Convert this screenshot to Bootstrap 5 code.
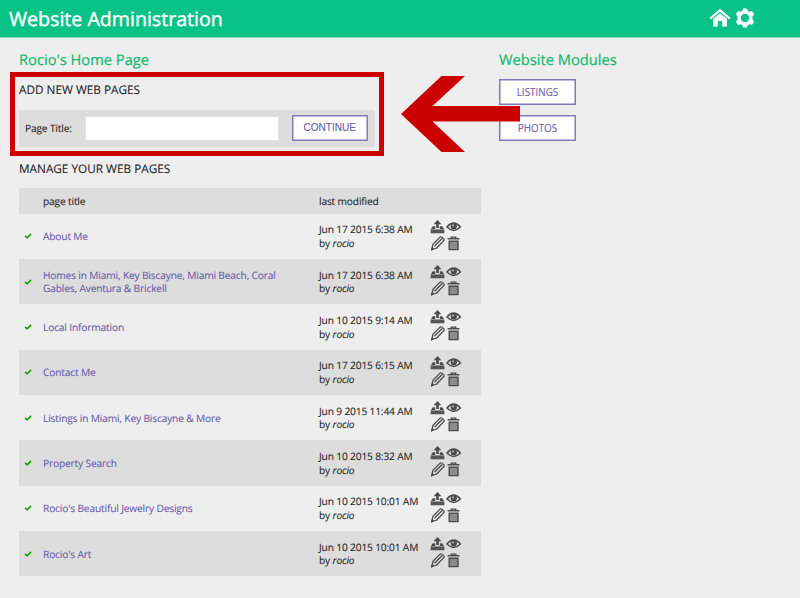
<!DOCTYPE html>
<html lang="en">
<head>
<meta charset="utf-8">
<meta name="viewport" content="width=device-width, initial-scale=1">
<title>Website Administration</title>
<link rel="stylesheet" href="https://cdn.jsdelivr.net/npm/bootstrap@5.3.0/dist/css/bootstrap.min.css">
<style>
body{background:#eee;color:#262626;font-family:"Open Sans",sans-serif;font-size:10.2px;letter-spacing:-.16px;line-height:13.6px;overflow:hidden;text-rendering:geometricPrecision;-webkit-text-stroke:.1px}
.topbar{background:#08c286;height:37.5px;border-bottom:1px solid #8fdcc0}
.site-title{font-size:19.6px;letter-spacing:0;line-height:37px;color:#fff;padding-left:9px;-webkit-text-stroke:.4px}
.top-icons{margin-right:45px;gap:4px}
.page-body{padding:0 0 0 19px}
.main-col{width:462px;margin-right:18px}
.green-head{font-size:14.7px;letter-spacing:0;line-height:20px;color:#14b870;margin:12.5px 0 0;height:20px;-webkit-text-stroke:.2px}
.sub-head{font-size:11.78px;letter-spacing:0;line-height:16px;font-weight:400;color:#222}
.manage-head{margin-top:5px}
.callout{border:5px solid #cb0000;width:374px;height:84px;margin:1.5px 0 0 -9px;padding:5.5px 4px 0}
.add-form{background:#ddd;height:37.5px;width:355.5px;margin-top:11.5px;padding:0 6px}
.add-form label{width:47px;white-space:nowrap;padding-top:2px}
.title-input{width:194px;height:25px;min-height:0;border:1px solid #e4e4e4;border-radius:0;background:#fff;padding:0 4px;margin-left:13px}
.btn-mod{--bs-btn-color:#6a60ab;--bs-btn-bg:#fff;--bs-btn-border-color:#8078bb;--bs-btn-hover-color:#6459a8;--bs-btn-hover-bg:#f4f3fb;--bs-btn-hover-border-color:#6459a8;--bs-btn-border-radius:0;width:77px;height:26px;padding:0;font-size:9.9px;letter-spacing:0;line-height:24px;border-width:1px;box-shadow:inset 0 0 0 .5px #8078bb}
.btn-cont{font-family:"Liberation Sans",Arial,sans-serif;font-size:10.1px;line-height:24px;width:76.5px;margin-left:12.5px}
.module-list{gap:10px;margin-top:9px}
.pages{margin:11.5px 0 0;table-layout:fixed;--bs-table-color:#262626;--bs-table-bg:#eee;color:#262626}
.pages th,.pages td{padding:1.5px 0 0;border:0;vertical-align:middle;font-weight:400}
.pages th{height:25.6px;background:#ddd}
.pages td{height:45.35px}
.pages tbody tr:nth-child(even) td{background:#ddd}
.pages td:first-child{padding:0 0 0 5px}
.pages td:last-child{padding:0 0 1px}
.pages a{color:#675cab;text-decoration:none}
.title-text{max-width:240px}
.tick{display:block}
.arrow-mark{left:401px;top:76px}
</style>
<script src="https://cdn.jsdelivr.net/npm/bootstrap@5.3.0/dist/js/bootstrap.bundle.min.js"></script>
</head>
<body>
<svg width="0" height="0" class="position-absolute" aria-hidden="true">
  <symbol id="tick" viewBox="0 0 8 8"><path d="M1.1 3.9 3.1 5.8 7.1 1.9" fill="none" stroke="#14a30c" stroke-width="1.7"/></symbol>
  <symbol id="tools" viewBox="0 0 32 32">
    <path d="M7.5 0 11.4 4.2H8.8V8H6.2V4.2H3.6ZM2.8 6.3H5.2V9H9.8V6.3H12.2L14.4 9.6H.6Z" fill="#4c4c4c"/>
    <path d="M.6 9.9H14.4V13.3H.6Z" fill="#565656"/>
    <path d="M17 7Q23.6-.8 30.4 7 23.6 13.8 17 7Z" fill="#eee" stroke="#4c4c4c" stroke-width="1.5"/>
    <circle cx="23.8" cy="6.3" r="3.2" fill="#4c4c4c"/><circle cx="23" cy="5.5" r=".9" fill="#ccc"/>
    <path d="M1.6 29.8 3 24.4 10.1 17.1M6.7 28 14 20.4M4.9 25.8 12.2 18.6" fill="none" stroke="#4c4c4c" stroke-width="1.35" stroke-linecap="round"/>
    <path d="M1.6 29.8 6.7 28M10.1 17.1Q11 16.4 12.2 17.3L13.7 18.7Q14.6 19.7 14 20.4" fill="none" stroke="#4c4c4c" stroke-width="1.1"/>
    <path d="M1.1 30.4 2.1 26.8 4.6 29.1Z" fill="#4c4c4c"/>
    <path d="M17.6 18.8H29.4M21.3 18.5V17.1H25.7V18.5" fill="none" stroke="#4c4c4c" stroke-width="1.4"/>
    <path d="M19.2 21.2H28V29.6H19.2Z" fill="#8c8c8c" stroke="#4c4c4c" stroke-width="1.4"/>
  </symbol>
</svg>

<header class="topbar d-flex align-items-center justify-content-between">
  <div class="site-title">Website Administration</div>
  <div class="top-icons d-flex align-items-center">
    <svg width="22" height="20" viewBox="0 0 22 20"><path d="M1.2 10.6 11 2.2 20.8 10.6" fill="none" stroke="#fff" stroke-width="2.3"/><path d="M4 10.9 11 5.2 18 10.9V18.5H13.2V13H8.8V18.5H4Z" fill="#fff"/></svg>
    <svg width="20" height="20" viewBox="0 0 20 20"><path fill="#fff" fill-rule="evenodd" d="M8 .4H12L12.7 2.8 14.2 3.7 16.9 3 19.2 6.2 17.5 8.2V11.8L19.2 13.8 16.9 17 14.2 16.3 12.7 17.2 12 19.6H8L7.3 17.2 5.8 16.3 3.1 17 .8 13.8 2.5 11.8V8.2L.8 6.2 3.1 3 5.8 3.7 7.3 2.8ZM10 5.8A4.2 4.2 0 1 0 10 14.2 4.2 4.2 0 1 0 10 5.8Z"/></svg>
  </div>
</header>

<main class="page-body d-flex align-items-start">
  <section class="main-col flex-shrink-0">
    <h1 class="green-head fw-normal">Rocio's Home Page</h1>
    <div class="callout">
      <h2 class="sub-head m-0">ADD NEW WEB PAGES</h2>
      <form class="add-form d-flex align-items-center">
        <label for="pt">Page Title:</label>
        <input id="pt" type="text" class="form-control title-input">
        <button type="button" class="btn btn-mod btn-cont">CONTINUE</button>
      </form>
    </div>
    <h2 class="sub-head manage-head mb-0">MANAGE YOUR WEB PAGES</h2>
    <table class="table pages">
      <colgroup><col style="width:24px"><col style="width:276px"><col style="width:111px"><col></colgroup>
      <thead><tr><th></th><th>page title</th><th>last modified</th><th></th></tr></thead>
      <tbody>
        <tr><td><svg class="tick" width="8" height="8"><use href="#tick"/></svg></td><td><div class="title-text"><a href="#">About Me</a></div></td><td>Jun 17 2015 6:38 AM<br>by <i>rocio</i></td><td><svg class="d-block" width="32" height="32"><use href="#tools"/></svg></td></tr>
        <tr><td><svg class="tick" width="8" height="8"><use href="#tick"/></svg></td><td><div class="title-text"><a href="#">Homes in Miami, Key Biscayne, Miami Beach, Coral Gables, Aventura &amp; Brickell</a></div></td><td>Jun 17 2015 6:38 AM<br>by <i>rocio</i></td><td><svg class="d-block" width="32" height="32"><use href="#tools"/></svg></td></tr>
        <tr><td><svg class="tick" width="8" height="8"><use href="#tick"/></svg></td><td><div class="title-text"><a href="#">Local Information</a></div></td><td>Jun 10 2015 9:14 AM<br>by <i>rocio</i></td><td><svg class="d-block" width="32" height="32"><use href="#tools"/></svg></td></tr>
        <tr><td><svg class="tick" width="8" height="8"><use href="#tick"/></svg></td><td><div class="title-text"><a href="#">Contact Me</a></div></td><td>Jun 17 2015 6:15 AM<br>by <i>rocio</i></td><td><svg class="d-block" width="32" height="32"><use href="#tools"/></svg></td></tr>
        <tr><td><svg class="tick" width="8" height="8"><use href="#tick"/></svg></td><td><div class="title-text"><a href="#">Listings in Miami, Key Biscayne &amp; More</a></div></td><td>Jun 9 2015 11:44 AM<br>by <i>rocio</i></td><td><svg class="d-block" width="32" height="32"><use href="#tools"/></svg></td></tr>
        <tr><td><svg class="tick" width="8" height="8"><use href="#tick"/></svg></td><td><div class="title-text"><a href="#">Property Search</a></div></td><td>Jun 10 2015 8:32 AM<br>by <i>rocio</i></td><td><svg class="d-block" width="32" height="32"><use href="#tools"/></svg></td></tr>
        <tr><td><svg class="tick" width="8" height="8"><use href="#tick"/></svg></td><td><div class="title-text"><a href="#">Rocio's Beautiful Jewelry Designs</a></div></td><td>Jun 10 2015 10:01 AM<br>by <i>rocio</i></td><td><svg class="d-block" width="32" height="32"><use href="#tools"/></svg></td></tr>
        <tr><td><svg class="tick" width="8" height="8"><use href="#tick"/></svg></td><td><div class="title-text"><a href="#">Rocio's Art</a></div></td><td>Jun 10 2015 10:01 AM<br>by <i>rocio</i></td><td><svg class="d-block" width="32" height="32"><use href="#tools"/></svg></td></tr>
      </tbody>
    </table>
  </section>
  <aside>
    <h2 class="green-head fw-normal">Website Modules</h2>
    <div class="module-list d-flex flex-column">
      <button type="button" class="btn btn-mod">LISTINGS</button>
      <button type="button" class="btn btn-mod">PHOTOS</button>
    </div>
  </aside>
</main>
<svg class="arrow-mark position-absolute" width="120" height="77" viewBox="0 0 120 77"><path d="M0 38 40.5 0H64L31.5 30H119V45.5H31.5L64 76H40.5Z" fill="#cb0000"/></svg>
</body>
</html>
